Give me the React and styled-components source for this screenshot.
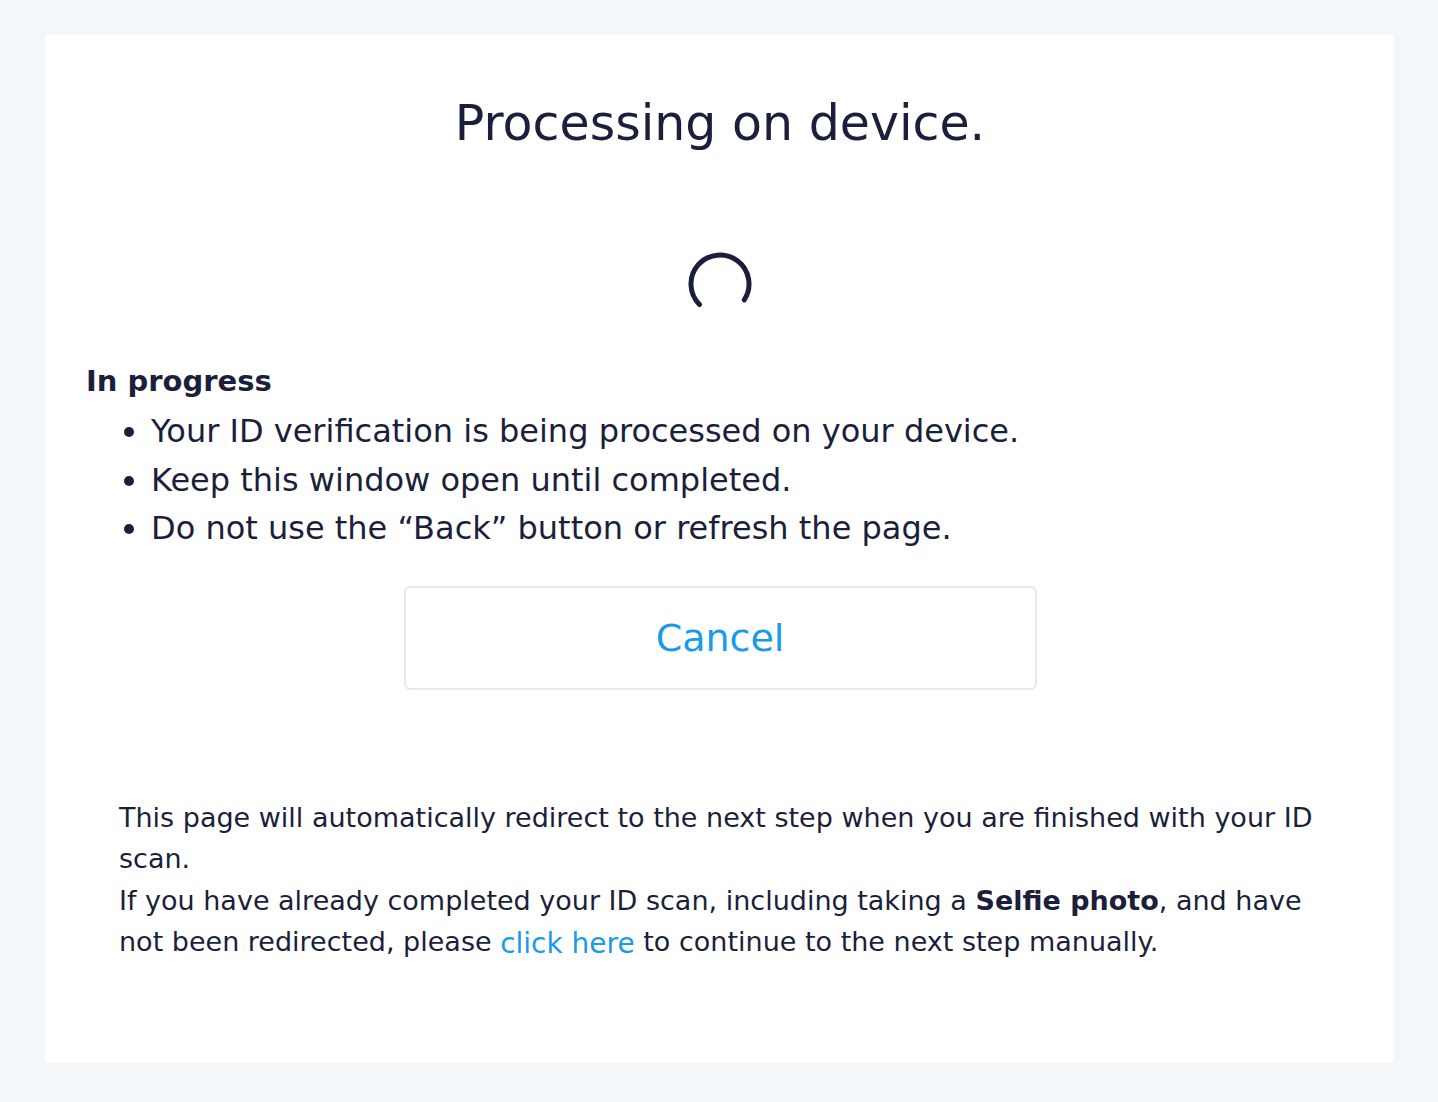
import styled, { createGlobalStyle } from "styled-components";

const GlobalStyle = createGlobalStyle`
  html, body {
    margin: 0;
    padding: 0;
    background: #f4f7fa;
  }
  body {
    font-family: "DejaVu Sans", "Open Sans", sans-serif;
    color: #1b1f3b;
  }
`;

const Page = styled.div`
  padding: 34px 44px 39px 45px;
`;

const Card = styled.div`
  background: #ffffff;
  border-radius: 4px;
  height: 1029px;
  box-sizing: border-box;
  padding: 55px 40px 0 41px;
  display: flex;
  flex-direction: column;
`;

const Title = styled.h1`
  margin: 0;
  font-size: 49px;
  line-height: 70px;
  font-weight: 500;
  text-align: center;
`;

const SpinnerWrap = styled.div`
  display: flex;
  justify-content: center;
  margin-top: 93px;
  height: 64px;
`;

const Heading = styled.h2`
  margin: 41px 0 0;
  font-size: 29px;
  line-height: 48px;
  font-weight: 600;
`;

const List = styled.ul`
  margin: 2px 0 0;
  padding-left: 65px;
  font-size: 32px;
  line-height: 48.5px;
`;

const CancelButton = styled.button`
  align-self: center;
  margin-top: 33px;
  width: 633px;
  height: 104px;
  background: #ffffff;
  border: 2px solid #e6e8ea;
  border-radius: 6px;
  color: #1a9be8;
  font-family: inherit;
  font-size: 38px;
  cursor: pointer;
`;

const Footer = styled.p`
  margin: 107px 25px 0 33px;
  font-size: 27px;
  line-height: 41.5px;

  b {
    font-weight: 700;
  }
`;

const Link = styled.a`
  color: #1a9be8;
  font-size: 28px;
  line-height: 1;
  vertical-align: -2px;
  text-decoration: none;
`;

function Spinner() {
  return (
    <svg width="66" height="66" viewBox="0 0 66 66">
      <path
        d="M12.5 52.5 A29 29 0 1 1 57.3 47.8"
        fill="none"
        stroke="#1b1f3b"
        strokeWidth="5"
        strokeLinecap="round"
      />
    </svg>
  );
}

export default function App() {
  return (
    <>
      <GlobalStyle />
      <Page>
        <Card>
          <Title>Processing on device.</Title>
          <SpinnerWrap>
            <Spinner />
          </SpinnerWrap>
          <Heading>In progress</Heading>
          <List>
            <li>Your ID verification is being processed on your device.</li>
            <li>Keep this window open until completed.</li>
            <li>Do not use the “Back” button or refresh the page.</li>
          </List>
          <CancelButton>Cancel</CancelButton>
          <Footer>
            This page will automatically redirect to the next step when you are finished with your ID scan.
            <br />
            If you have already completed your ID scan, including taking a <b>Selfie photo</b>, and have
            not been redirected, please <Link href="#">click here</Link> to continue to the next step manually.
          </Footer>
        </Card>
      </Page>
    </>
  );
}
